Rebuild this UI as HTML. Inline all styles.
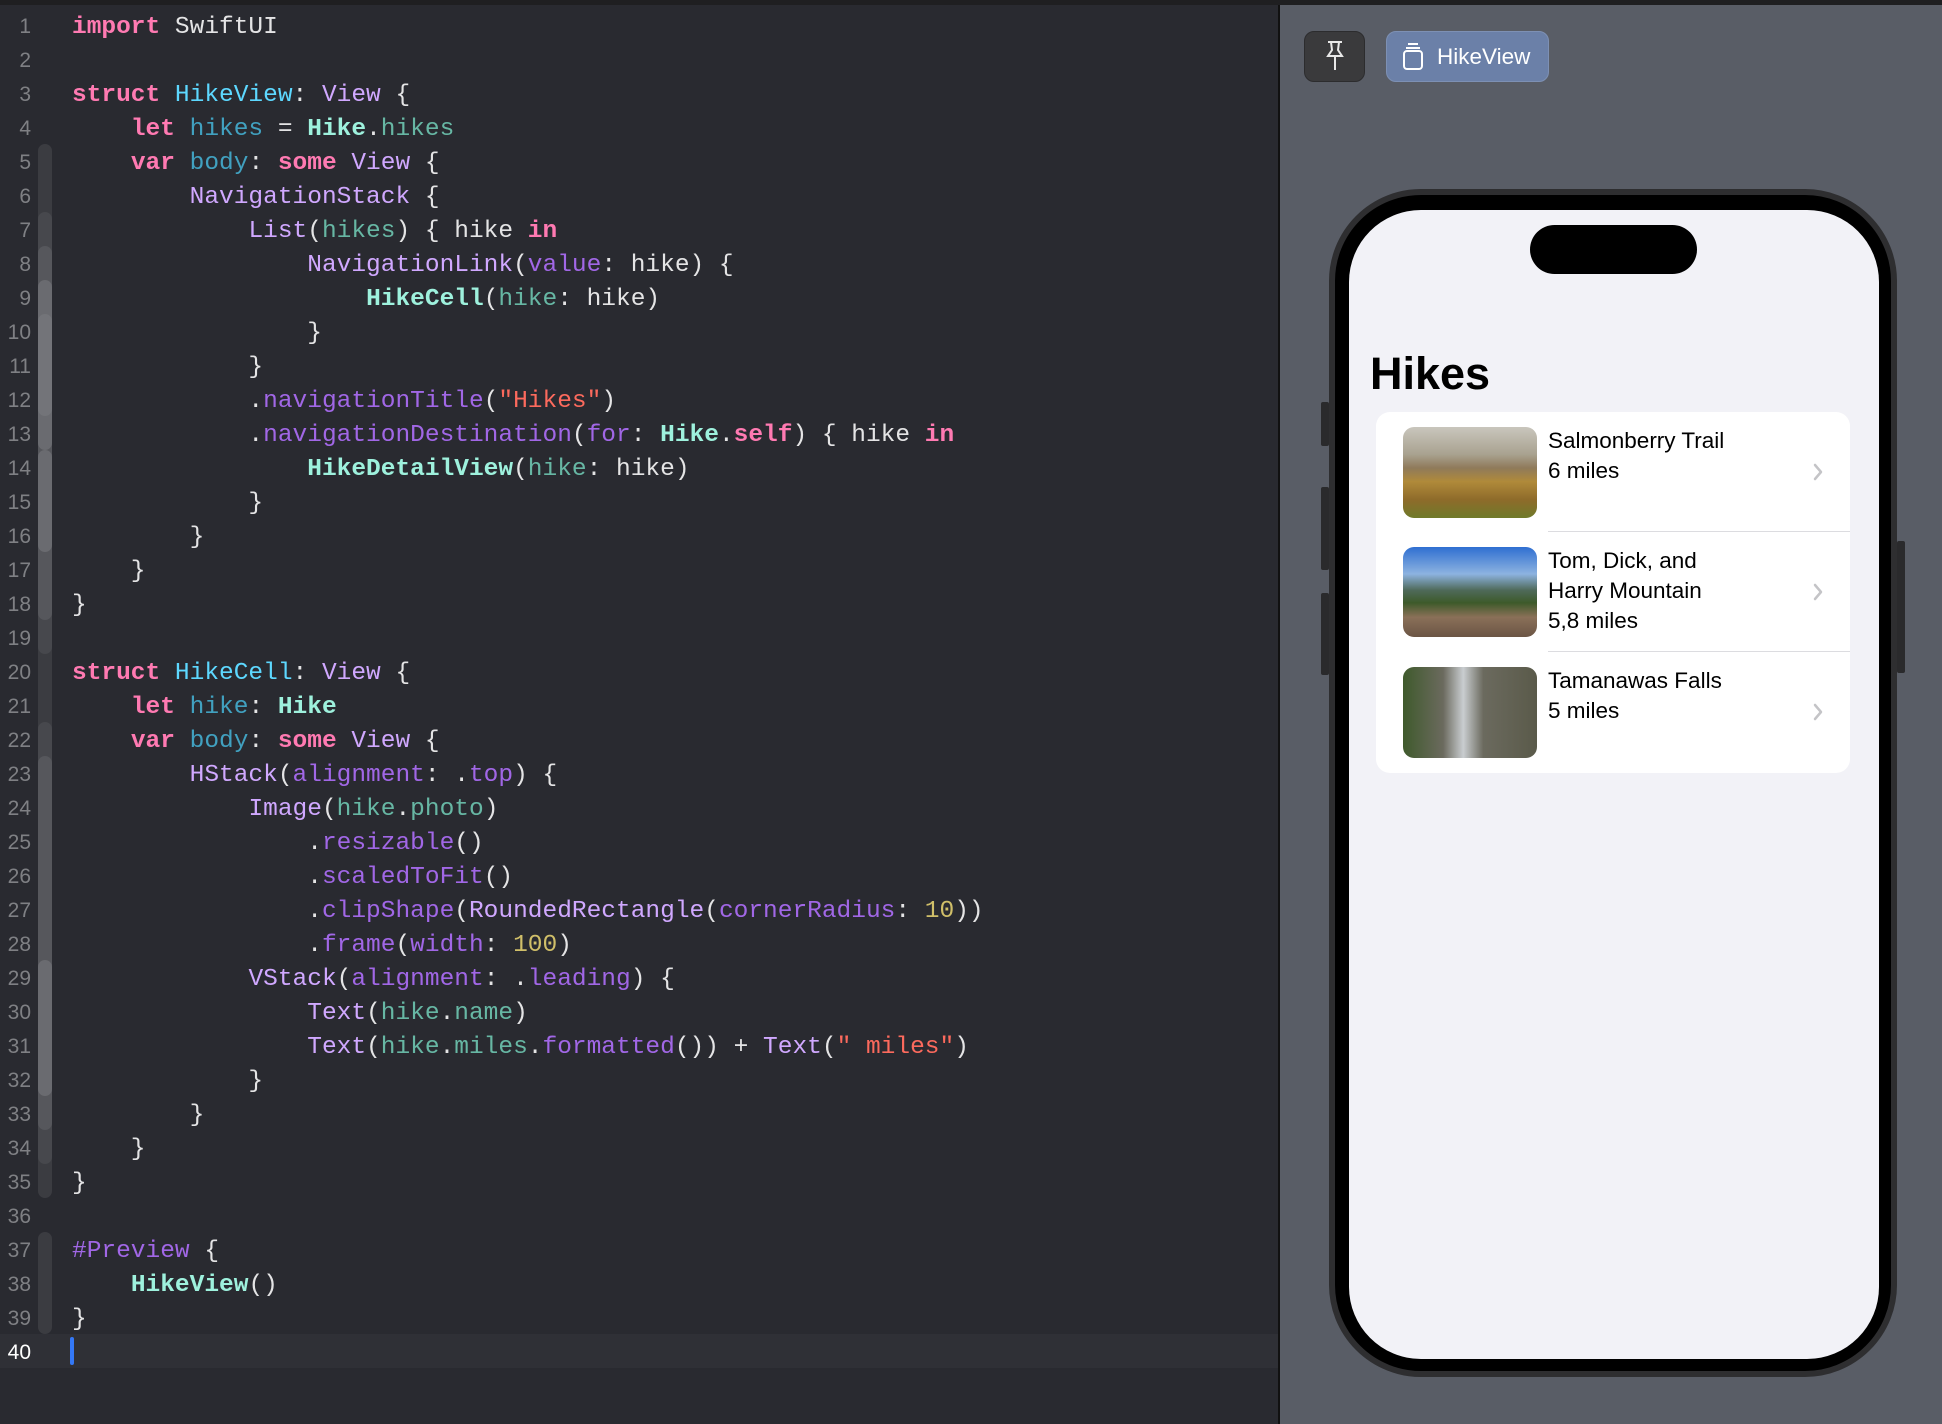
<!DOCTYPE html>
<html><head><meta charset="utf-8"><style>
*{margin:0;padding:0;box-sizing:border-box}
body{width:1942px;height:1424px;overflow:hidden;background:#292a30;position:relative;font-family:"Liberation Sans",sans-serif}
.top{position:absolute;left:0;top:0;width:1942px;height:5px;background:#1f1f21}
.ed{position:absolute;left:0;top:5px;width:1278px;height:1419px;background:#292a30}
.cur{position:absolute;left:0;top:1334px;width:1278px;height:34px;background:#2f3036}
.ln{position:absolute;left:0;width:31px;text-align:right;font-size:21px;color:#7f8084;line-height:34px;height:34px;margin-top:2px}
.cl{position:absolute;left:72px;font-family:"Liberation Mono",monospace;font-size:24.5px;line-height:34px;height:34px;white-space:pre;color:#e4e4e5;margin-top:3px}
.rb{position:absolute;left:38px;width:14px;border-radius:7px}
.k{color:#ff7ab2;font-weight:bold}.d{color:#5dd8ff}.dv{color:#41a1c0}.p{color:#9ef1dd;font-weight:bold}.pp{color:#67b7a4}.s{color:#d0a8ff}.sf{color:#a167e6}.st{color:#fc6a5d}.n{color:#d0bf69}
.pv{position:absolute;left:1278px;top:5px;width:664px;height:1419px;background:#595d66;border-left:2px solid #111}
.btn{position:absolute;border-radius:10px}
.side{position:absolute;background:#2a2a2c;border-radius:2px}
.row{position:absolute;left:1548px;font-size:22.5px;line-height:30px;color:#000}
.img{position:absolute;left:1403px;width:134px;border-radius:11px}
.sep{position:absolute;left:1548px;width:302px;height:1px;background:#dcdce0}
.chev{position:absolute;left:1812px}
</style></head><body>
<div class="top"></div>
<div class="ed"></div>
<div class="cur"></div>
<!-- ribbons -->
<div class="rb" style="top:144px;height:544px;background:#3b3c41"></div>
<div class="rb" style="top:212px;height:442px;background:#47484d"></div>
<div class="rb" style="top:246px;height:374px;background:#56575c"></div>
<div class="rb" style="top:280px;height:170px;background:#6a6b70"></div>
<div class="rb" style="top:314px;height:102px;background:#737479"></div>
<div class="rb" style="top:450px;height:102px;background:#6a6b70"></div>
<div class="rb" style="top:654px;height:544px;background:#3b3c41"></div>
<div class="rb" style="top:722px;height:442px;background:#47484d"></div>
<div class="rb" style="top:756px;height:374px;background:#56575c"></div>
<div class="rb" style="top:960px;height:136px;background:#6a6b70"></div>
<div class="rb" style="top:1232px;height:102px;background:#3b3c41"></div>

<div class="ln" style="top:8px">1</div><div class="ln" style="top:42px">2</div><div class="ln" style="top:76px">3</div><div class="ln" style="top:110px">4</div><div class="ln" style="top:144px">5</div><div class="ln" style="top:178px">6</div><div class="ln" style="top:212px">7</div><div class="ln" style="top:246px">8</div><div class="ln" style="top:280px">9</div><div class="ln" style="top:314px">10</div><div class="ln" style="top:348px">11</div><div class="ln" style="top:382px">12</div><div class="ln" style="top:416px">13</div><div class="ln" style="top:450px">14</div><div class="ln" style="top:484px">15</div><div class="ln" style="top:518px">16</div><div class="ln" style="top:552px">17</div><div class="ln" style="top:586px">18</div><div class="ln" style="top:620px">19</div><div class="ln" style="top:654px">20</div><div class="ln" style="top:688px">21</div><div class="ln" style="top:722px">22</div><div class="ln" style="top:756px">23</div><div class="ln" style="top:790px">24</div><div class="ln" style="top:824px">25</div><div class="ln" style="top:858px">26</div><div class="ln" style="top:892px">27</div><div class="ln" style="top:926px">28</div><div class="ln" style="top:960px">29</div><div class="ln" style="top:994px">30</div><div class="ln" style="top:1028px">31</div><div class="ln" style="top:1062px">32</div><div class="ln" style="top:1096px">33</div><div class="ln" style="top:1130px">34</div><div class="ln" style="top:1164px">35</div><div class="ln" style="top:1198px">36</div><div class="ln" style="top:1232px">37</div><div class="ln" style="top:1266px">38</div><div class="ln" style="top:1300px">39</div><div class="ln" style="top:1334px;color:#fff">40</div>

<div class="cl" style="top:8px"><span class="k">import</span> SwiftUI</div>
<div class="cl" style="top:76px"><span class="k">struct</span> <span class="d">HikeView</span>: <span class="s">View</span> {</div>
<div class="cl" style="top:110px">    <span class="k">let</span> <span class="dv">hikes</span> = <span class="p">Hike</span>.<span class="pp">hikes</span></div>
<div class="cl" style="top:144px">    <span class="k">var</span> <span class="dv">body</span>: <span class="k">some</span> <span class="s">View</span> {</div>
<div class="cl" style="top:178px">        <span class="s">NavigationStack</span> {</div>
<div class="cl" style="top:212px">            <span class="s">List</span>(<span class="pp">hikes</span>) { hike <span class="k">in</span></div>
<div class="cl" style="top:246px">                <span class="s">NavigationLink</span>(<span class="sf">value</span>: hike) {</div>
<div class="cl" style="top:280px">                    <span class="p">HikeCell</span>(<span class="pp">hike</span>: hike)</div>
<div class="cl" style="top:314px">                }</div>
<div class="cl" style="top:348px">            }</div>
<div class="cl" style="top:382px">            .<span class="sf">navigationTitle</span>(<span class="st">"Hikes"</span>)</div>
<div class="cl" style="top:416px">            .<span class="sf">navigationDestination</span>(<span class="sf">for</span>: <span class="p">Hike</span>.<span class="k">self</span>) { hike <span class="k">in</span></div>
<div class="cl" style="top:450px">                <span class="p">HikeDetailView</span>(<span class="pp">hike</span>: hike)</div>
<div class="cl" style="top:484px">            }</div>
<div class="cl" style="top:518px">        }</div>
<div class="cl" style="top:552px">    }</div>
<div class="cl" style="top:586px">}</div>
<div class="cl" style="top:654px"><span class="k">struct</span> <span class="d">HikeCell</span>: <span class="s">View</span> {</div>
<div class="cl" style="top:688px">    <span class="k">let</span> <span class="dv">hike</span>: <span class="p">Hike</span></div>
<div class="cl" style="top:722px">    <span class="k">var</span> <span class="dv">body</span>: <span class="k">some</span> <span class="s">View</span> {</div>
<div class="cl" style="top:756px">        <span class="s">HStack</span>(<span class="sf">alignment</span>: .<span class="sf">top</span>) {</div>
<div class="cl" style="top:790px">            <span class="s">Image</span>(<span class="pp">hike</span>.<span class="pp">photo</span>)</div>
<div class="cl" style="top:824px">                .<span class="sf">resizable</span>()</div>
<div class="cl" style="top:858px">                .<span class="sf">scaledToFit</span>()</div>
<div class="cl" style="top:892px">                .<span class="sf">clipShape</span>(<span class="s">RoundedRectangle</span>(<span class="sf">cornerRadius</span>: <span class="n">10</span>))</div>
<div class="cl" style="top:926px">                .<span class="sf">frame</span>(<span class="sf">width</span>: <span class="n">100</span>)</div>
<div class="cl" style="top:960px">            <span class="s">VStack</span>(<span class="sf">alignment</span>: .<span class="sf">leading</span>) {</div>
<div class="cl" style="top:994px">                <span class="s">Text</span>(<span class="pp">hike</span>.<span class="pp">name</span>)</div>
<div class="cl" style="top:1028px">                <span class="s">Text</span>(<span class="pp">hike</span>.<span class="pp">miles</span>.<span class="sf">formatted</span>()) + <span class="s">Text</span>(<span class="st">" miles"</span>)</div>
<div class="cl" style="top:1062px">            }</div>
<div class="cl" style="top:1096px">        }</div>
<div class="cl" style="top:1130px">    }</div>
<div class="cl" style="top:1164px">}</div>
<div class="cl" style="top:1232px"><span class="sf">#Preview</span> {</div>
<div class="cl" style="top:1266px">    <span class="p">HikeView</span>()</div>
<div class="cl" style="top:1300px">}</div>
<div style="position:absolute;left:70px;top:1337px;width:4px;height:28px;background:#3478f6;border-radius:2px"></div>

<div class="pv"></div>
<div class="btn" style="left:1304px;top:31px;width:61px;height:51px;background:#3a3a3c;border:1px solid #2c2c2e"></div>
<svg style="position:absolute;left:1320px;top:40px" width="30" height="34" viewBox="0 0 30 34" fill="none" stroke="#e8e8e8" stroke-width="2"><path d="M8 2h14M11 2l1 8-4 6h14l-4-6 1-8M15 16v14"/></svg>
<div class="btn" style="left:1386px;top:31px;width:163px;height:51px;background:#6b80a8;border:1px solid #7d90b4"></div>
<svg style="position:absolute;left:1400px;top:42px" width="26" height="30" viewBox="0 0 26 30" fill="none" stroke="#fff" stroke-width="2"><path d="M8 2h10M6 6h14"/><rect x="4" y="9" width="18" height="18" rx="3"/></svg>
<div style="position:absolute;left:1437px;top:42px;font-size:22.5px;color:#fff;line-height:30px">HikeView</div>

<div class="side" style="left:1321px;top:402px;width:8px;height:44px"></div>
<div class="side" style="left:1321px;top:487px;width:8px;height:83px"></div>
<div class="side" style="left:1321px;top:593px;width:8px;height:82px"></div>
<div class="side" style="left:1897px;top:541px;width:8px;height:132px"></div>
<div style="position:absolute;left:1329px;top:189px;width:568px;height:1188px;border-radius:92px;background:#000;border:6px solid #2e2e30"></div>
<div style="position:absolute;left:1349px;top:210px;width:530px;height:1149px;border-radius:72px;background:#f2f2f7"></div>
<div style="position:absolute;left:1530px;top:225px;width:167px;height:49px;border-radius:25px;background:#000"></div>
<div style="position:absolute;left:1370px;top:347px;font-size:45px;font-weight:bold;color:#000;line-height:54px">Hikes</div>
<div style="position:absolute;left:1376px;top:412px;width:474px;height:361px;border-radius:14px;background:#fff"></div>

<div class="img" style="top:427px;height:91px;background:linear-gradient(180deg,#c9c6bd 0%,#a9a290 30%,#8f7a5a 45%,#b08a3a 60%,#8e6b2a 80%,#6f7a2a 100%)"></div>
<div class="img" style="top:547px;height:90px;background:linear-gradient(180deg,#2f6fd1 0%,#8db3e0 30%,#4f6a5a 48%,#3d5a2a 62%,#8a7058 78%,#6b5545 100%)"></div>
<div class="img" style="top:667px;height:91px;background:linear-gradient(90deg,#3f5a2c 0%,#6b6a5e 30%,#c9cdd0 45%,#6b6a5e 60%,#5a5a4a 100%)"></div>

<div class="row" style="top:426px">Salmonberry Trail<br>6 miles</div>
<div class="row" style="top:546px">Tom, Dick, and<br>Harry Mountain<br>5,8 miles</div>
<div class="row" style="top:666px">Tamanawas Falls<br>5 miles</div>
<div class="sep" style="top:531px"></div>
<div class="sep" style="top:651px"></div>
<svg class="chev" style="top:462px" width="12" height="20" viewBox="0 0 12 20" fill="none" stroke="#c4c4c7" stroke-width="2.5" stroke-linecap="round" stroke-linejoin="round"><path d="M3 3l6 7-6 7"/></svg>
<svg class="chev" style="top:582px" width="12" height="20" viewBox="0 0 12 20" fill="none" stroke="#c4c4c7" stroke-width="2.5" stroke-linecap="round" stroke-linejoin="round"><path d="M3 3l6 7-6 7"/></svg>
<svg class="chev" style="top:702px" width="12" height="20" viewBox="0 0 12 20" fill="none" stroke="#c4c4c7" stroke-width="2.5" stroke-linecap="round" stroke-linejoin="round"><path d="M3 3l6 7-6 7"/></svg>
</body></html>
